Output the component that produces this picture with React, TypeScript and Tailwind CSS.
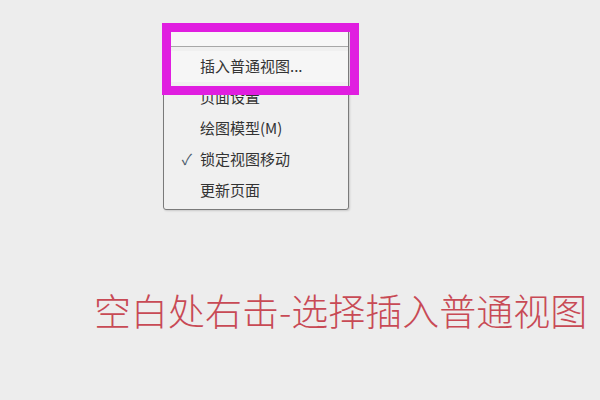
import React from "react";

const items = [
  { label: "插入普通视图...", checked: false },
  { label: "页面设置", checked: false },
  { label: "绘图模型(M)", checked: false },
  { label: "锁定视图移动", checked: true },
  { label: "更新页面", checked: false },
];

export default function App() {
  return (
    <div
      className="relative w-[600px] h-[400px] overflow-hidden bg-[#ededed]"
      style={{ fontFamily: '"Noto Sans CJK SC", "Noto Sans", sans-serif' }}
    >
      {/* context menu */}
      <div className="absolute left-[163px] top-[28px] w-[186px] rounded-[3px] border border-[#7a7a7a] bg-[#f0f0f0] shadow-[1px_1px_2px_rgba(0,0,0,0.15)] flex flex-col pb-[3px]">
        <div className="h-[18px] bg-[#f7f7f7] border-b border-[#a8a8a8]" />
        <div className="flex flex-col pt-[4px]">
          {items.map((it, i) => (
            <div
              key={i}
              className={`h-[31px] flex items-center text-[15px] text-[#333333] ${i === 0 ? "bg-[#f6f6f6]" : ""}`}
            >
              <span className="w-[36px] flex justify-end pr-[8px] text-[#4a5a6a] text-[15px]">
                {it.checked ? "✓" : ""}
              </span>
              <span>{it.label}</span>
            </div>
          ))}
        </div>
      </div>

      {/* highlight annotation */}
      <div className="absolute left-[162px] top-[23px] w-[197px] h-[72px] border-[9px] border-[#e01ee0]" />

      {/* caption */}
      <div className="pt-[289px] pl-[94px] text-[37px] leading-[42px] text-[#c84a55] font-light">
        空白处右击-选择插入普通视图
      </div>
    </div>
  );
}
